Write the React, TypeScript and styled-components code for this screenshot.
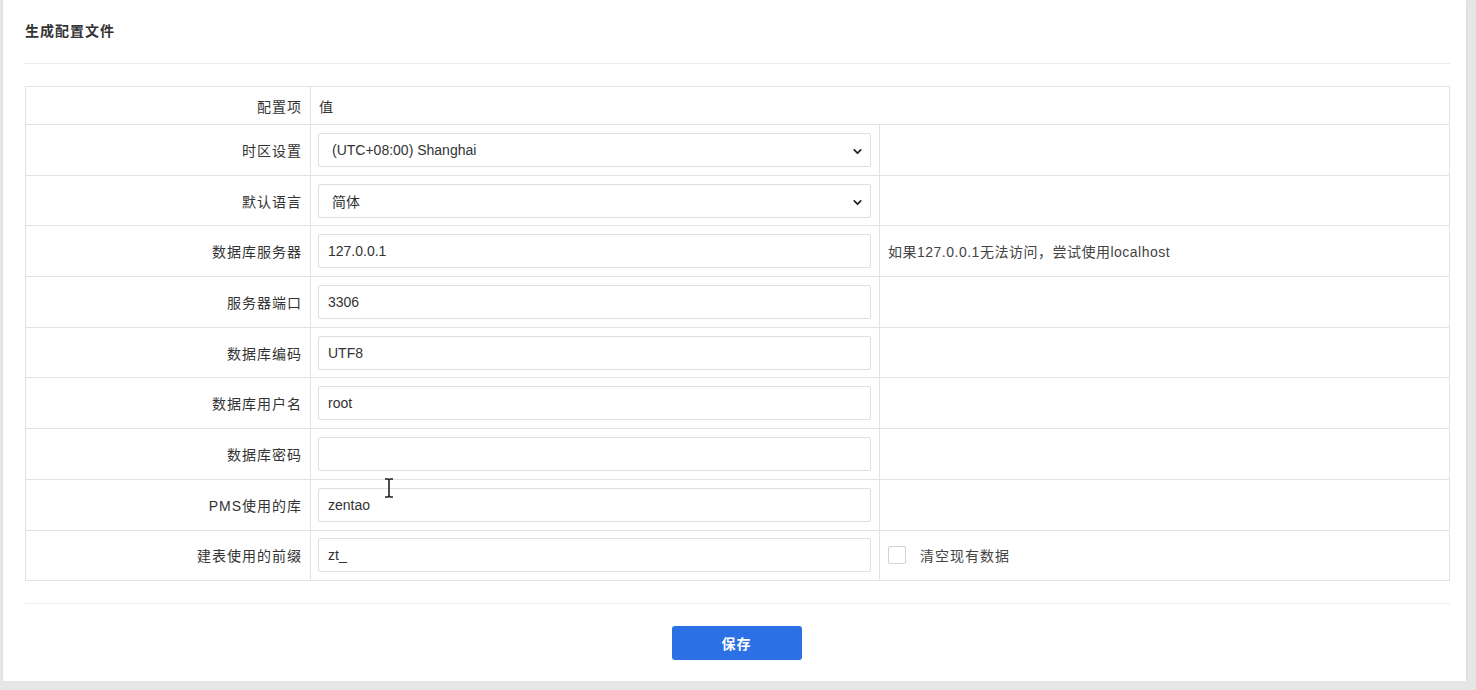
import React from 'react'
import styled, { createGlobalStyle } from 'styled-components'
import { ChevronDown } from 'lucide-react'

const GlobalStyle = createGlobalStyle`
  body {
    margin: 0;
    background: #e6e6e6;
    font-family: "Liberation Sans", "Noto Sans CJK SC", sans-serif;
    font-size: 14px;
    color: #333;
  }
`

interface Field {
  label: string
  value: string
  kind: 'select' | 'input'
  hint?: string
  checkbox?: string
}

const fields: Field[] = [
  { label: '时区设置', value: '(UTC+08:00) Shanghai', kind: 'select' },
  { label: '默认语言', value: '简体', kind: 'select' },
  { label: '数据库服务器', value: '127.0.0.1', kind: 'input', hint: '如果127.0.0.1无法访问，尝试使用localhost' },
  { label: '服务器端口', value: '3306', kind: 'input' },
  { label: '数据库编码', value: 'UTF8', kind: 'input' },
  { label: '数据库用户名', value: 'root', kind: 'input' },
  { label: '数据库密码', value: '', kind: 'input' },
  { label: 'PMS使用的库', value: 'zentao', kind: 'input' },
  { label: '建表使用的前缀', value: 'zt_', kind: 'input', checkbox: '清空现有数据' },
]

const App = () => (
  <>
    <GlobalStyle />
    <Panel>
      <Header>
        <Title>生成配置文件</Title>
      </Header>
      <ConfigTable>
        <colgroup>
          <col style={{ width: 285 }} />
          <col style={{ width: 569 }} />
          <col />
        </colgroup>
        <thead>
          <HeadRow>
            <LabelCell as="th">配置项</LabelCell>
            <HeadCell colSpan={2}>值</HeadCell>
          </HeadRow>
        </thead>
        <tbody>
          {fields.map((f) => (
            <Row key={f.label}>
              <LabelCell>{f.label}</LabelCell>
              <FieldCell>
                {f.kind === 'select' ? (
                  <SelectBox>
                    <span>{f.value}</span>
                    <Chevron>
                      <ChevronDown size={13} strokeWidth={3.2} />
                    </Chevron>
                  </SelectBox>
                ) : (
                  <TextBox defaultValue={f.value} readOnly />
                )}
                {f.label === 'PMS使用的库' && (
                  <Cursor width="10" height="20" viewBox="0 0 10 20">
                    <path d="M1 1h3l1 1 1-1h3M5 2v16M1 19h3l1-1 1 1h3" fill="none" stroke="#222" strokeWidth="1.6" />
                  </Cursor>
                )}
              </FieldCell>
              <HintCell>
                {f.hint}
                {f.checkbox && (
                  <CheckLabel>
                    <CheckBox />
                    {f.checkbox}
                  </CheckLabel>
                )}
              </HintCell>
            </Row>
          ))}
        </tbody>
      </ConfigTable>
      <Footer>
        <SaveButton>保存</SaveButton>
      </Footer>
    </Panel>
  </>
)

const Panel = styled.div`
  margin-left: 3px;
  width: 1463px;
  height: 681px;
  box-sizing: border-box;
  background: #fff;
  padding: 0 16px 0 21px;
  box-shadow: 0 1px 3px rgba(0, 0, 0, 0.08);
`

const Header = styled.div`
  height: 64px;
  display: flex;
  align-items: center;
  border-bottom: 1px solid #ececec;
  padding-left: 1px;
  padding-bottom: 4px;
  box-sizing: border-box;
`

const Title = styled.h2`
  margin: 0;
  font-size: 14px;
  letter-spacing: 1px;
  font-weight: bold;
  color: #333;
`

const ConfigTable = styled.table`
  margin: 22px 0 0 1px;
  width: 1425px;
  border-collapse: collapse;
  table-layout: fixed;
  border: 1px solid #dcdcdc;
`

const HeadRow = styled.tr`
  height: 38px;
`

const Row = styled.tr`
  height: 50.7px;
`

const LabelCell = styled.td`
  border: 1px solid #e2e2e2;
  text-align: right;
  padding: 0 8px 0 0;
  font-weight: normal;
  letter-spacing: 1px;
  color: #333;
  white-space: nowrap;
`

const HeadCell = styled.th`
  border: 1px solid #e2e2e2;
  text-align: left;
  font-weight: normal;
  padding: 0 8px;
  color: #333;
`

const FieldCell = styled.td`
  border: 1px solid #e2e2e2;
  padding: 0 8px 0 7px;
  position: relative;
`

const HintCell = styled.td`
  border: 1px solid #e2e2e2;
  padding: 0 9px 0 8px;
  letter-spacing: 0.5px;
  color: #444;
`

const TextBox = styled.input`
  display: block;
  width: 100%;
  height: 34px;
  box-sizing: border-box;
  border: 1px solid #dedede;
  border-radius: 2px;
  padding: 0 9px;
  font-family: inherit;
  font-size: 14px;
  color: #333;
  outline: none;
  background: #fff;
`

const SelectBox = styled.div`
  position: relative;
  display: flex;
  align-items: center;
  height: 34px;
  box-sizing: border-box;
  border: 1px solid #dedede;
  border-radius: 2px;
  padding: 0 9px 0 13px;
  color: #333;
`

const Chevron = styled.span`
  position: absolute;
  right: 6px;
  top: 11px;
  color: #222;
  display: flex;
`

const Cursor = styled.svg`
  position: absolute;
  left: 73px;
  top: -2px;
`

const CheckLabel = styled.label`
  display: flex;
  align-items: center;
  gap: 14px;
  color: #444;
  letter-spacing: 1px;
`

const CheckBox = styled.span`
  width: 16px;
  height: 16px;
  border: 1px solid #d2d2d2;
  border-radius: 2px;
  background: #fff;
`

const Footer = styled.div`
  margin: 22px 0 0 1px;
  width: 1425px;
  border-top: 1px solid #ececec;
  display: flex;
  justify-content: center;
  padding-top: 22px;
`

const SaveButton = styled.button`
  width: 130px;
  height: 34px;
  margin-right: 2px;
  border: none;
  border-radius: 3px;
  background: #2b70e4;
  color: #fff;
  font-family: inherit;
  font-size: 14px;
  letter-spacing: 1px;
  font-weight: bold;
  cursor: pointer;
`

export default App
